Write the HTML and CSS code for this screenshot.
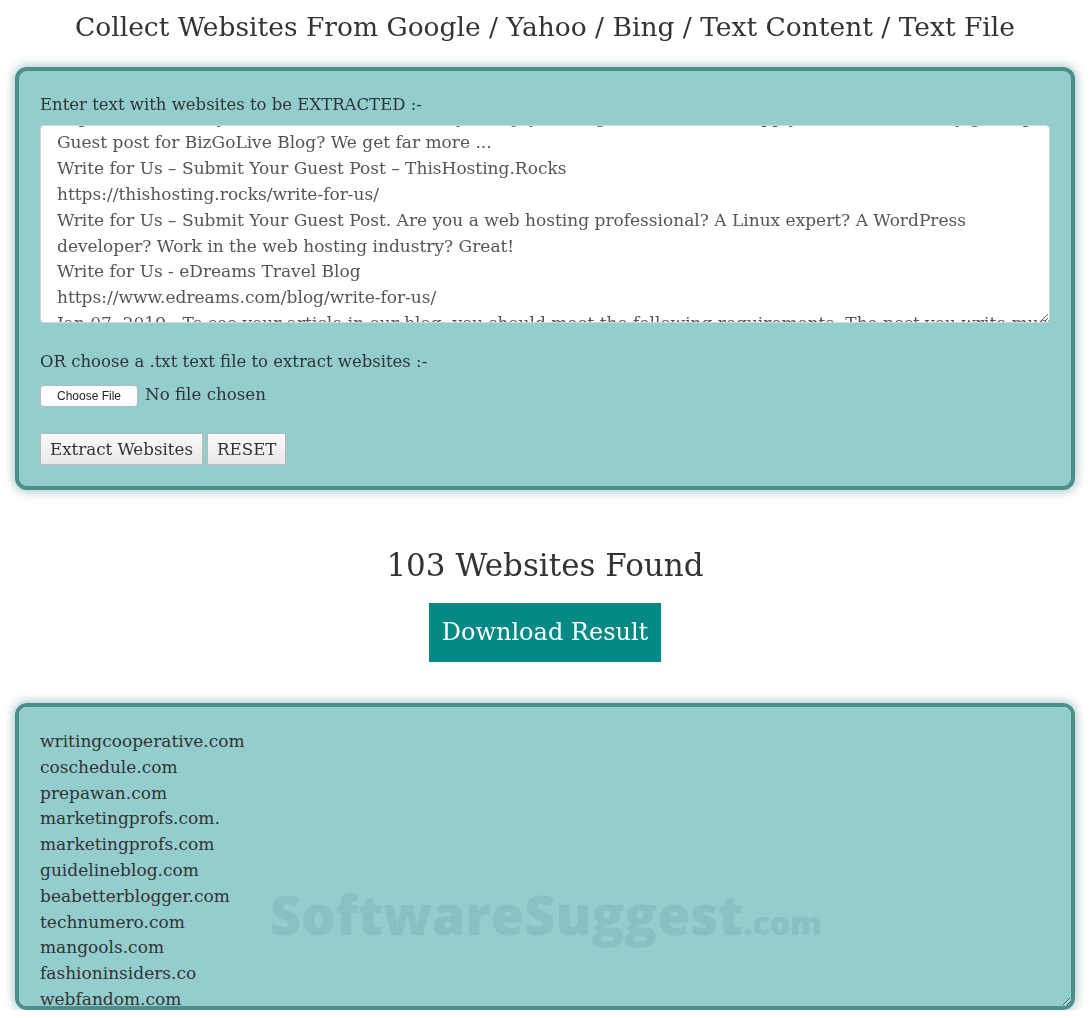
FILE: index.html
```html
<!DOCTYPE html>
<html lang="en">
<head>
    <meta charset="UTF-8">
    <meta name="viewport" content="width=device-width, initial-scale=1.0">
    <title>Website Extractor</title>
    <link rel="stylesheet" href="styles.css">
</head>
<body>
    <div class="page">
        <h1 class="page-title">Collect Websites From Google / Yahoo / Bing / Text Content / Text File</h1>

        <form class="extract-box">
            <label class="field-label" for="source-text">Enter text with websites to be EXTRACTED :-</label>
            <textarea class="source-text" id="source-text" wrap="off">Write for Us - Business, Technology, Marketing, Lifestyle, Startups - BizGoLive
https://www.bizgolive.com/write-for-us/
Sep 10, 2018 - Do you want to write for us? If you enjoy writing about business, apply to contribute. Why guest posting on a big
Guest post for BizGoLive Blog? We get far more ...
Write for Us – Submit Your Guest Post – ThisHosting.Rocks
https://thishosting.rocks/write-for-us/
Write for Us – Submit Your Guest Post. Are you a web hosting professional? A Linux expert? A WordPress
developer? Work in the web hosting industry? Great!
Write for Us - eDreams Travel Blog
https://www.edreams.com/blog/write-for-us/
Jan 07, 2019 - To see your article in our blog, you should meet the following requirements: The post you write must
be original and it should not be published anywhere else.
Write For Us - Guest Blogging Guidelines - Writing Cooperative
https://writingcooperative.com/write-for-us/</textarea>

            <label class="field-label file-label" for="source-file">OR choose a .txt text file to extract websites :-</label>
            <div class="file-row">
                <input type="file" id="source-file" class="file-input" accept=".txt">
            </div>

            <div class="form-actions">
                <button type="button" class="btn">Extract Websites</button>
                <button type="reset" class="btn">RESET</button>
            </div>
        </form>

        <h2 class="result-count">103 Websites Found</h2>
        <div class="download-row">
            <a href="#" class="btn-download">Download Result</a>
        </div>

        <div class="result-wrap">
            <textarea class="result-text" readonly>writingcooperative.com
coschedule.com
prepawan.com
marketingprofs.com.
marketingprofs.com
guidelineblog.com
beabetterblogger.com
technumero.com
mangools.com
fashioninsiders.co
webfandom.com
thishosting.rocks
edreams.com
bizgolive.com</textarea>
            <div class="watermark">SoftwareSuggest<span>.com</span></div>
        </div>
    </div>

    <script>
        document.getElementById('source-text').scrollTop = 78;
    </script>
</body>
</html>
```

FILE: styles.css
```css
:root {
    --color-text: #333333;
    --color-text-soft: #555555;
    --color-panel: #94cdcd;
    --color-panel-border: #4b8e8c;
    --color-accent: #038a85;
}

* {
    box-sizing: border-box;
}

body {
    margin: 0;
    font-family: "DejaVu Serif", "Liberation Serif", serif;
    color: var(--color-text);
    background-color: #ffffff;
}

.page {
    padding: 0 15px;
}

.page-title {
    margin: 10px 0 23px;
    font-size: 26.5px;
    font-weight: normal;
    line-height: 34px;
    text-align: center;
}

.extract-box {
    padding: 21px;
    background-color: var(--color-panel);
    border: 4px solid var(--color-panel-border);
    border-radius: 12px;
    box-shadow: 0 0 10px 2px rgba(75, 142, 140, 0.45);
}

.field-label {
    display: block;
    font-size: 16.5px;
    line-height: 26px;
    margin-bottom: 7px;
}

.source-text {
    display: block;
    width: 100%;
    height: 198px;
    padding: 5px 16px;
    font-family: inherit;
    font-size: 17px;
    line-height: 25.8px;
    color: var(--color-text-soft);
    background-color: #ffffff;
    border: 1px solid #d6d6d6;
    border-radius: 4px;
    overflow: auto;
    scrollbar-width: none;
}

.file-label {
    margin: 26px 0 0;
}

.file-row {
    margin-top: 9px;
}

.file-input {
    font-family: inherit;
    font-size: 16.7px;
    color: var(--color-text);
}

.file-input::file-selector-button {
    font-family: "Liberation Sans", Arial, sans-serif;
    font-size: 12px;
    padding: 3px 16px;
    margin-right: 7px;
    color: #222222;
    background-color: #ffffff;
    border: 1px solid #b8b8b8;
    border-radius: 4px;
}

.form-actions {
    display: flex;
    gap: 4px;
    margin-top: 26px;
}

.btn {
    height: 32px;
    padding: 0 9px;
    font-family: inherit;
    font-size: 16.7px;
    color: var(--color-text);
    background: linear-gradient(#fafafa, #e9e9e9);
    border: 1px solid #b9b9b9;
    cursor: pointer;
}

.result-count {
    margin: 56px 0 19px;
    font-size: 31px;
    font-weight: normal;
    line-height: 38px;
    text-align: center;
}

.download-row {
    display: flex;
    justify-content: center;
}

.btn-download {
    display: block;
    height: 59px;
    padding: 0 13px;
    font-size: 24px;
    line-height: 59px;
    color: #ffffff;
    text-decoration: none;
    background-color: var(--color-accent);
}

.result-wrap {
    position: relative;
    margin-top: 41px;
}

.result-text {
    display: block;
    width: 100%;
    height: 307px;
    padding: 22px 21px 0;
    font-family: inherit;
    font-size: 17px;
    line-height: 25.8px;
    color: var(--color-text);
    background-color: var(--color-panel);
    border: 4px solid var(--color-panel-border);
    border-radius: 12px;
    box-shadow: 0 0 10px 2px rgba(75, 142, 140, 0.45);
    overflow: auto;
    scrollbar-width: none;
}

.watermark {
    position: absolute;
    top: 184px;
    left: 255px;
    font-family: "Open Sans", sans-serif;
    font-size: 54px;
    font-weight: 800;
    line-height: 1;
    color: #86c2c3;
    pointer-events: none;
}

.watermark span {
    font-size: 32px;
}
```
